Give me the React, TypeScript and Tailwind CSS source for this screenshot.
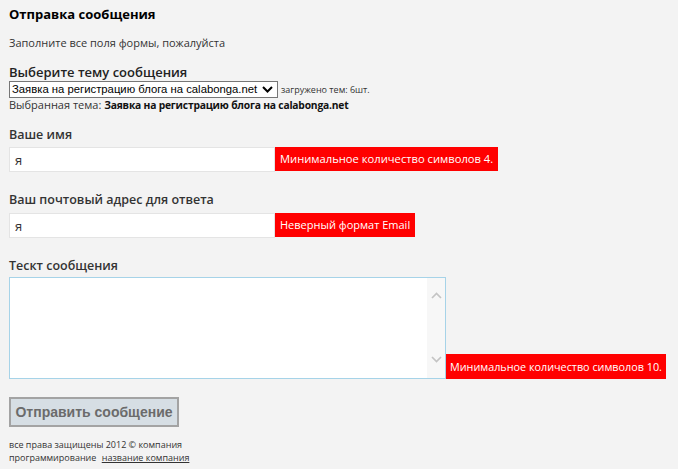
import React from "react";

const ui = { fontFamily: '"Open Sans", "Noto Sans", sans-serif' };
const arial = { fontFamily: '"Liberation Sans", Arial, sans-serif' };

function Chevron({ up }: { up?: boolean }) {
  return (
    <svg width="11" height="7" viewBox="0 0 11 7" fill="none">
      <path
        d={up ? "M1 6 L5.5 1.5 L10 6" : "M1 1 L5.5 5.5 L10 1"}
        stroke="#c4c4c4"
        strokeWidth="1.7"
      />
    </svg>
  );
}

export default function App() {
  return (
    <div className="min-h-[469px] w-[678px] bg-[#f3f3f3] text-[#222] pl-[9px] pt-[4px]" style={ui}>
      <h1 className="text-[13px] font-bold text-black leading-[20px]">Отправка сообщения</h1>
      <p className="mt-[11px] text-[11px] leading-[16px] text-[#333]">Заполните все поля формы, пожалуйста</p>

      <div className="mt-[12px] text-[13px] font-semibold leading-[18px] text-[#222]">Выберите тему сообщения</div>
      <div className="flex items-center gap-[3px]">
        <div className="relative w-[269px] h-[17px] border border-[#767676] bg-white flex items-center shrink-0" style={arial}>
          <select
            className="appearance-none w-full h-full bg-transparent pl-[2px] text-[11.3px] leading-[15px] text-black outline-none"
            defaultValue="reg"
          >
            <option value="reg">Заявка на регистрацию блога на calabonga.net</option>
          </select>
          <svg className="absolute right-[4px] top-[3px] pointer-events-none" width="11" height="9" viewBox="0 0 11 9" fill="none">
            <path d="M1 2 L5.5 6.5 L10 2" stroke="#000" strokeWidth="2" />
          </svg>
        </div>
        <span className="text-[9px] text-[#333] leading-[12px] whitespace-nowrap">загружено тем: 6шт.</span>
      </div>
      <p className="text-[11px] leading-[14px] text-[#333]">
        Выбранная тема:{" "}
        <b className="font-bold text-[#111] text-[10.3px] tracking-[-0.2px]">Заявка на регистрацию блога на calabonga.net</b>
      </p>

      <div className="mt-[14px] text-[12.5px] font-semibold leading-[18px] text-[#333]">Ваше имя</div>
      <div className="mt-[3px] flex items-start">
        <input
          className="w-[266px] h-[25px] shrink-0 bg-white border border-[#e4e4e4] pl-[5px] text-[13px] text-[#333] outline-none"
          defaultValue="я"
          style={ui}
        />
        <span className="h-[24px] whitespace-nowrap bg-[#ff0000] text-white text-[11.2px] leading-[24px] px-[5px]">Минимальное количество символов 4.</span>
      </div>

      <div className="mt-[19px] text-[12.5px] font-semibold leading-[18px] text-[#333]">Ваш почтовый адрес для ответа</div>
      <div className="mt-[4px] flex items-start">
        <input
          className="w-[266px] h-[25px] shrink-0 bg-white border border-[#e4e4e4] pl-[5px] text-[13px] text-[#333] outline-none"
          defaultValue="я"
          style={ui}
        />
        <span className="h-[24px] whitespace-nowrap bg-[#ff0000] text-white text-[11px] leading-[24px] px-[5px]">Неверный формат Email</span>
      </div>

      <div className="mt-[19px] text-[12.5px] font-semibold leading-[18px] text-[#333]">Тескт сообщения</div>
      <div className="mt-[2px] flex items-end">
        <div className="w-[437px] h-[102px] shrink-0 border border-[#a6d3e8] bg-white flex">
          <textarea className="flex-1 h-full resize-none outline-none bg-transparent p-[4px] text-[13px]" style={ui} />
          <div className="w-[18px] h-full bg-[#f7f7f7] flex flex-col items-center justify-between pt-[14px] pb-[15px]">
            <Chevron up />
            <Chevron />
          </div>
        </div>
        <span className="h-[25px] whitespace-nowrap bg-[#ff0000] text-white text-[10.8px] leading-[25px] px-[4px]">Минимальное количество символов 10.</span>
      </div>

      <button
        className="mt-[18px] w-[170px] h-[30px] whitespace-nowrap bg-[#d6dee4] border-2 border-[#a3a3a3] text-[14px] font-bold text-[#6b6b6b] leading-[26px]"
        style={arial}
      >
        Отправить сообщение
      </button>

      <div className="mt-[11px] text-[9px] leading-[13px] text-[#333]">
        <div>все права защищены 2012 © компания</div>
        <div>
          программирование <a className="ml-[3px] underline text-[#333]" href="#">название компания</a>
        </div>
      </div>
    </div>
  );
}
